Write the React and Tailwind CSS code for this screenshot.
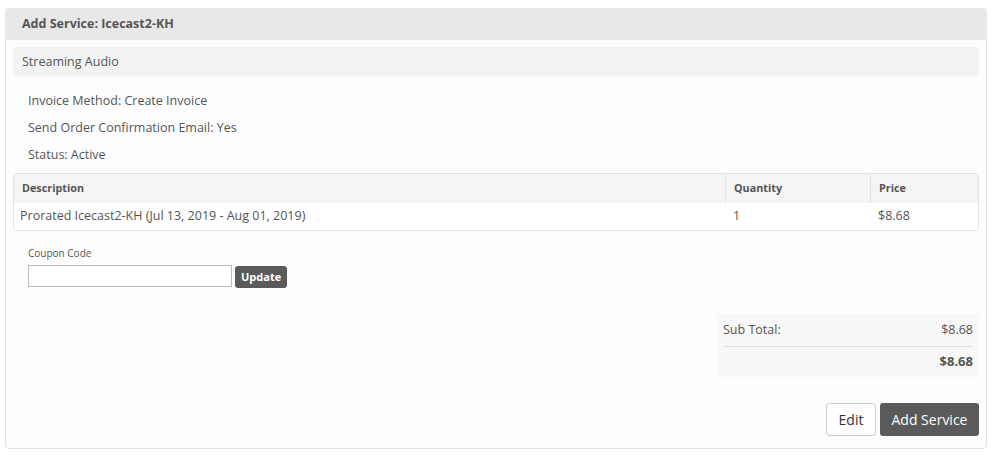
export default function App() {
  return (
    <div className="min-h-[455px] bg-white pt-2 px-[5px] font-['Open_Sans',sans-serif] text-[#555]">
      <div className="rounded-[4px] border border-[#e0e0e0] bg-[#fdfdfd]">
        <div className="flex h-[32px] items-center rounded-t-[4px] bg-[#e8e8e8] pl-[17px] text-[12.5px] font-bold text-[#555] -mx-px -mt-px">
          Add Service: Icecast2-KH
        </div>
        <div className="px-[7px] pt-[7px] pb-[12px]">
          <div className="flex h-[29px] items-center rounded-[4px] bg-[#f3f3f3] px-[9px] pt-px text-[12.5px]">
            Streaming Audio
          </div>
          <div className="px-[15px] pt-[11px] text-[12.5px] leading-[27px]">
            <div>Invoice Method: Create Invoice</div>
            <div>Send Order Confirmation Email: Yes</div>
            <div>Status: Active</div>
          </div>
          <table className="mt-[5px] w-full border-separate border-spacing-0 overflow-hidden rounded-[4px] border border-[#e3e3e3] text-[12.5px]">
            <thead>
              <tr className="bg-[#f4f4f4] text-[10.8px] font-bold">
                <th className="h-[29px] px-2 text-left">Description</th>
                <th className="w-[145px] border-l border-[#e3e3e3] px-2 text-left">Quantity</th>
                <th className="w-[108px] border-l border-[#e3e3e3] px-2 text-left">Price</th>
              </tr>
            </thead>
            <tbody>
              <tr className="bg-white">
                <td className="h-[27px] px-[6px]">Prorated Icecast2-KH (Jul 13, 2019 - Aug 01, 2019)</td>
                <td className="px-2">1</td>
                <td className="px-2">$8.68</td>
              </tr>
            </tbody>
          </table>
          <div className="px-[15px] pt-[14px]">
            <div className="text-[10px] leading-[16px]">Coupon Code</div>
            <div className="mt-[4px] flex items-start gap-[3px]">
              <input
                type="text"
                className="h-[22px] w-[204px] border border-[#bbb] bg-white outline-none"
              />
              <button className="mt-px h-[22px] rounded-[3px] bg-[#5a5a5a] px-[6px] text-[11px] font-bold text-white">
                Update
              </button>
            </div>
          </div>
          <div className="mt-[26px] flex justify-end">
            <div className="w-[262px] rounded-[4px] bg-[#f8f8f8] px-[6px] text-[12.5px]">
              <div className="flex h-[33px] items-center justify-between border-b border-[#e0e0e0]">
                <span>Sub Total:</span>
                <span>$8.68</span>
              </div>
              <div className="flex h-[30px] items-center justify-end text-[13px] font-bold">$8.68</div>
            </div>
          </div>
          <div className="mt-[26px] flex justify-end gap-1">
            <button className="h-[33px] w-[50px] rounded-[3px] border border-[#ccc] bg-white text-[14px] text-[#333]">
              Edit
            </button>
            <button className="h-[33px] w-[99px] rounded-[3px] bg-[#5a5a5a] text-[14px] text-white">
              Add Service
            </button>
          </div>
        </div>
      </div>
    </div>
  );
}
